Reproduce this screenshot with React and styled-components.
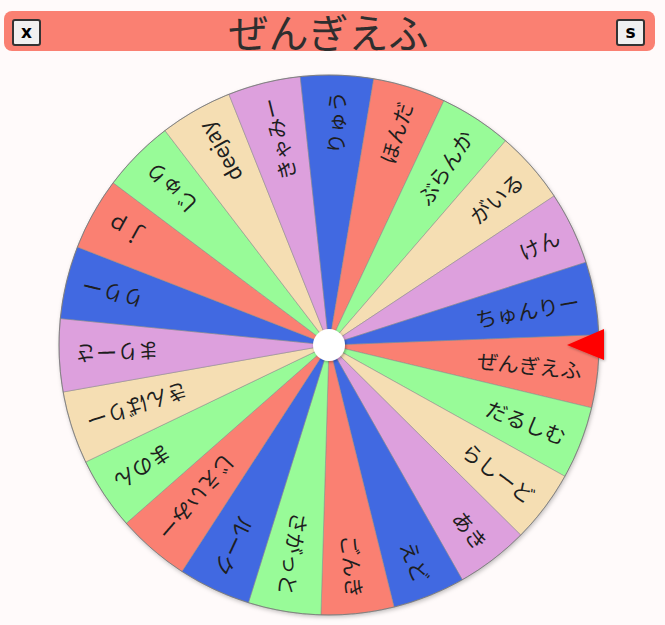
import React from 'react';
import styled, { createGlobalStyle } from 'styled-components';

const names = [
  'ぜんぎえふ', 'だるしむ', 'らしーど', 'あき', 'えど', 'ごんき', 'さがっと', 'ルーク',
  'じえいみー', 'まのん', 'きんばりー', 'まりーさ', 'りりー', 'ｊｐ', 'じゅり', 'deejay',
  'きゃみー', 'りゅう', 'ほんだ', 'ぶらんか', 'がいる', 'けん', 'ちゅんりー',
];

const SALMON = '#fa8072';
const GREEN = '#98fb98';
const WHEAT = '#f5deb3';
const PLUM = '#dda0dd';
const BLUE = '#4169e1';

const colors = [
  SALMON, GREEN, WHEAT, PLUM, BLUE, SALMON, GREEN, BLUE,
  SALMON, GREEN, WHEAT, PLUM, BLUE, SALMON, GREEN, WHEAT,
  PLUM, BLUE, SALMON, GREEN, WHEAT, PLUM, BLUE,
];

const CX = 272;
const CY = 272;
const R = 270;
const START = -2.2;
const STEP = 360 / names.length;

const GlobalStyle = createGlobalStyle`
  html, body {
    margin: 0;
    padding: 0;
    background: #fffafa;
    font-family: "Noto Sans CJK JP", "Noto Sans", sans-serif;
  }
`;

const Page = styled.div`
  width: 665px;
  height: 625px;
  padding-top: 11px;
  box-sizing: border-box;
`;

const Header = styled.header`
  margin-left: 4px;
  width: 651px;
  height: 40px;
  box-sizing: border-box;
  padding: 0 10px 0 8px;
  background: ${SALMON};
  border-radius: 8px;
  display: flex;
  align-items: center;
  justify-content: space-between;
`;

const Title = styled.h1`
  margin: 0;
  font-size: 40px;
  line-height: 40px;
  font-weight: 400;
  color: #2e2e2e;
  font-family: "Noto Sans CJK JP", sans-serif;
`;

const IconButton = styled.button`
  width: 29px;
  height: 27px;
  padding: 0;
  margin-top: 2px;
  background: #f0f0f0;
  border: 2px solid #333;
  border-radius: 3px;
  font-family: "DejaVu Sans", sans-serif;
  font-weight: 700;
  font-size: 17px;
  color: #000;
  display: flex;
  align-items: center;
  justify-content: center;
`;

const WheelArea = styled.div`
  margin: 22px 0 0 57px;
  width: 560px;
  height: 550px;
`;

const WheelSvg = styled.svg`
  display: block;
  overflow: visible;
`;

const Label = styled.text`
  font-family: "Noto Sans CJK JP", sans-serif;
  font-size: 21px;
  fill: #1e1e1e;
`;

const rad = (d) => (d * Math.PI) / 180;
const pt = (a, r) => [CX + r * Math.cos(rad(a)), CY + r * Math.sin(rad(a))];

function Segment({ index, name, color }) {
  const a0 = START + index * STEP;
  const a1 = a0 + STEP;
  const [x0, y0] = pt(a0, R);
  const [x1, y1] = pt(a1, R);
  const mid = a0 + STEP / 2;
  return (
    <g>
      <path
        d={`M${CX} ${CY} L${x0} ${y0} A${R} ${R} 0 0 1 ${x1} ${y1} Z`}
        fill={color}
        stroke="#8a8a8a"
        strokeWidth="0.5"
      />
      <Label
        x={CX + 254}
        y={CY}
        textAnchor="end"
        dominantBaseline="central"
        transform={`rotate(${mid} ${CX} ${CY})`}
      >
        {name}
      </Label>
    </g>
  );
}

function Wheel() {
  return (
    <WheelSvg width="560" height="550" viewBox="0 0 560 550">
      <defs>
        <filter id="rim" x="-10%" y="-10%" width="120%" height="120%">
          <feDropShadow dx="1" dy="2" stdDeviation="2" floodColor="#000" floodOpacity="0.25" />
        </filter>
        <filter id="soft" x="-50%" y="-50%" width="200%" height="200%">
          <feDropShadow dx="1" dy="1" stdDeviation="1.5" floodColor="#000" floodOpacity="0.35" />
        </filter>
      </defs>
      <circle cx={CX} cy={CY} r={R} fill="#ccc" filter="url(#rim)" />
      {names.map((n, i) => (
        <Segment key={n} index={i} name={n} color={colors[i]} />
      ))}
      <circle cx={CX} cy={CY} r={R} fill="none" stroke="#777" strokeWidth="0.8" />
      <circle cx={CX} cy={CY} r="16" fill="#fff" filter="url(#soft)" />
      <polygon
        points={`${CX + 238},${CY} ${CX + 275},${CY - 16} ${CX + 275},${CY + 15}`}
        fill="#ff0000"
        filter="url(#soft)"
      />
    </WheelSvg>
  );
}

export default function App() {
  return (
    <Page>
      <GlobalStyle />
      <Header>
        <IconButton>x</IconButton>
        <Title>ぜんぎえふ</Title>
        <IconButton>s</IconButton>
      </Header>
      <WheelArea>
        <Wheel />
      </WheelArea>
    </Page>
  );
}
